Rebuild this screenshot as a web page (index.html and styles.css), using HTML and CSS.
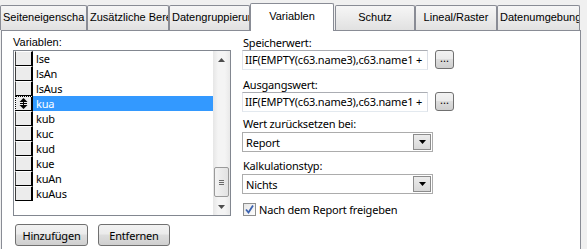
FILE: index.html
```html
<!DOCTYPE html>
<html lang="de">
<head>
  <meta charset="UTF-8">
  <title>Variablen</title>
  <link rel="stylesheet" href="styles.css">
</head>
<body>
  <div class="dialog">
    <div class="tabs">
      <div class="tab">Seiteneigenscha</div>
      <div class="tab">Zusätzliche Bere</div>
      <div class="tab">Datengruppierur</div>
      <div class="tab active">Variablen</div>
      <div class="tab">Schutz</div>
      <div class="tab">Lineal/Raster</div>
      <div class="tab">Datenumgebung</div>
    </div>

    <!-- Page: Variablen -->
    <div class="panel">
      <div class="left-col">
        <div class="list-label">Variablen:</div>
        <div class="listbox">
          <ul class="var-list">
            <li><span class="handle"></span><span class="name">lse</span></li>
            <li><span class="handle"></span><span class="name">lsAn</span></li>
            <li><span class="handle"></span><span class="name">lsAus</span></li>
            <li class="selected">
              <span class="handle focus">
                <svg width="9" height="11" viewBox="0 0 9 11">
                  <path d="M4.5 0 L8.5 4 L0.5 4 Z M4.5 11 L8.5 7 L0.5 7 Z" fill="#000"/>
                  <rect x="4" y="3" width="1" height="5" fill="#000"/>
                  <rect x="1" y="5" width="7" height="1" fill="#000"/>
                </svg>
              </span><span class="name">kua</span>
            </li>
            <li><span class="handle"></span><span class="name">kub</span></li>
            <li><span class="handle"></span><span class="name">kuc</span></li>
            <li><span class="handle"></span><span class="name">kud</span></li>
            <li><span class="handle"></span><span class="name">kue</span></li>
            <li><span class="handle"></span><span class="name">kuAn</span></li>
            <li><span class="handle"></span><span class="name">kuAus</span></li>
          </ul>
          <div class="scrollbar">
            <div class="sb-arrow">
              <svg width="7" height="4" viewBox="0 0 7 4"><path d="M3.5 0 L7 4 L0 4 Z" fill="#4d4d4d"/></svg>
            </div>
            <div class="sb-track">
              <div class="sb-thumb"><span></span><span></span><span></span></div>
            </div>
            <div class="sb-arrow">
              <svg width="7" height="4" viewBox="0 0 7 4"><path d="M0 0 L7 0 L3.5 4 Z" fill="#4d4d4d"/></svg>
            </div>
          </div>
        </div>
        <div class="buttons">
          <button class="btn add-btn">Hinzufügen</button>
          <button class="btn">Entfernen</button>
        </div>
      </div>

      <div class="right-col">
        <div class="field-label">Speicherwert:</div>
        <div class="field-row">
          <div class="textbox">IIF(EMPTY(c63.name3),c63.name1 +</div>
          <button class="dots-btn">...</button>
        </div>

        <div class="field-label second">Ausgangswert:</div>
        <div class="field-row">
          <div class="textbox">IIF(EMPTY(c63.name3),c63.name1 +</div>
          <button class="dots-btn">...</button>
        </div>

        <div class="field-label third">Wert zurücksetzen bei:</div>
        <div class="combo">
          <span class="combo-text">Report</span>
          <span class="combo-arrow">
            <svg width="7" height="4" viewBox="0 0 7 4"><path d="M0 0 L7 0 L3.5 4 Z" fill="#000"/></svg>
          </span>
        </div>

        <div class="field-label fourth">Kalkulationstyp:</div>
        <div class="combo">
          <span class="combo-text">Nichts</span>
          <span class="combo-arrow">
            <svg width="7" height="4" viewBox="0 0 7 4"><path d="M0 0 L7 0 L3.5 4 Z" fill="#000"/></svg>
          </span>
        </div>

        <label class="check-row">
          <span class="checkbox">
            <svg width="11" height="11" viewBox="0 0 11 11">
              <path d="M2 5.5 L4.5 8.5 L9 1.5" fill="none" stroke="#3b62b0" stroke-width="1.8"/>
            </svg>
          </span>
          Nach dem Report freigeben
        </label>
      </div>
    </div>
  </div>
</body>
</html>
```

FILE: styles.css
```css
/* General */
body {
  margin: 0;
  width: 587px;
  height: 249px;
  overflow: hidden;
  background: #f0f0f0;
  font-family: "Noto Sans", sans-serif;
  font-size: 11px;
  letter-spacing: -0.2px;
  color: #000;
}

/* Tab strip */
.tabs {
  display: grid;
  grid-template-columns: 87px 82px 81px 85px 80px 82px 83px;
  align-items: end;
  height: 30px;
}

.tab {
  box-sizing: border-box;
  height: 25px;
  padding: 0 2px;
  border: 1px solid #898c95;
  border-bottom: none;
  border-radius: 2px 2px 0 0;
  background: linear-gradient(#f6f6f6, #e1e1e1);
  font-family: "Liberation Sans", sans-serif;
  font-size: 11px;
  letter-spacing: 0;
  line-height: 22px;
  text-align: center;
  white-space: nowrap;
  overflow: hidden;
}

.tab.active {
  position: relative;
  z-index: 1;
  height: 28px;
  margin-right: 1px;
  margin-bottom: -1px;
  background: #fff;
  line-height: 24px;
}

/* Page */
.panel {
  box-sizing: border-box;
  display: grid;
  grid-template-columns: 218px 191px;
  column-gap: 11px;
  width: 580px;
  height: 219px;
  margin-left: 1px;
  padding: 4px 0 0 11px;
  border: 1px solid #898c95;
  border-bottom: none;
  background: #fff;
}

/* Left column: variable list */
.list-label {
  height: 15px;
  line-height: 15px;
  font-family: "Liberation Sans", sans-serif;
  letter-spacing: 0;
}

.listbox {
  box-sizing: border-box;
  display: flex;
  height: 166px;
  border: 1px solid #828790;
}

.var-list {
  flex: 1;
  list-style: none;
  margin: 0;
  padding: 0;
}

.var-list li {
  display: flex;
  height: 15px;
}

.handle {
  box-sizing: border-box;
  display: flex;
  align-items: center;
  justify-content: center;
  width: 18px;
  height: 15px;
  margin-left: 1px;
  border: 1px solid #000;
  border-top-color: #fff;
  border-left-color: #404040;
  border-right-width: 2px;
  background: #ececec;
}

.handle.focus {
  border-top: 1px dotted #000;
  border-left: 1px dotted #000;
}

.name {
  flex: 1;
  padding-left: 3px;
  line-height: 15px;
}

.selected .name {
  background: #3399ff;
  color: #fff;
}

/* Scrollbar */
.scrollbar {
  display: flex;
  flex-direction: column;
  width: 17px;
  background: linear-gradient(to right, #e6e6e6, #f4f4f4 30%, #f4f4f4 70%, #e9e9e9);
}

.sb-arrow {
  display: flex;
  align-items: center;
  justify-content: center;
  height: 17px;
}

.sb-track {
  flex: 1;
  display: flex;
  flex-direction: column;
  justify-content: flex-end;
  padding-bottom: 1px;
}

.sb-thumb {
  box-sizing: border-box;
  display: flex;
  flex-direction: column;
  align-items: center;
  justify-content: center;
  gap: 1px;
  height: 30px;
  margin: 0 1px;
  border: 1px solid #9a9a9a;
  border-radius: 2px;
  background: linear-gradient(to right, #f3f3f3, #e2e2e2);
}

.sb-thumb span {
  width: 5px;
  height: 1px;
  background: #6a6a6a;
}

/* Buttons */
.buttons {
  display: flex;
  gap: 10px;
  margin: 8px 0 0 2px;
}

.btn {
  box-sizing: border-box;
  width: 72px;
  height: 22px;
  padding: 0;
  border: 1px solid #707070;
  border-radius: 3px;
  background: linear-gradient(#f2f2f2, #ebebeb 45%, #dddddd 50%, #cfcfcf);
  font-family: "Noto Sans", sans-serif;
  font-size: 11px;
  letter-spacing: -0.2px;
  color: #000;
}

.add-btn {
  width: 73px;
}

/* Right column: fields */
.right-col {
  display: flex;
  flex-direction: column;
}

.field-label {
  height: 15px;
  padding-left: 1px;
  line-height: 15px;
}

.field-label.second {
  margin-top: 7px;
}

.field-label.third {
  margin-top: 4px;
}

.field-label.fourth {
  margin-top: 6px;
}

.field-row {
  display: flex;
  align-items: flex-start;
  gap: 7px;
  width: 212px;
}

.textbox {
  box-sizing: border-box;
  width: 186px;
  height: 20px;
  padding: 0 2px;
  border: 1px solid #abadb3;
  border-color: #abadb3 #dbdfe6 #e3e9ef #e2e3ea;
  line-height: 18px;
  white-space: nowrap;
  overflow: hidden;
}

.dots-btn {
  box-sizing: border-box;
  width: 19px;
  height: 19px;
  padding: 0 0 4px;
  border: 1px solid #707070;
  border-radius: 3px;
  background: linear-gradient(#f2f2f2, #ebebeb 45%, #dddddd 50%, #cfcfcf);
  font-family: "Noto Sans", sans-serif;
  font-size: 11px;
  line-height: 12px;
  color: #000;
}

.combo {
  box-sizing: border-box;
  display: flex;
  align-items: center;
  width: 191px;
  height: 20px;
  margin-top: 1px;
  padding: 1px;
  border: 1px solid #acacac;
}

.combo-text {
  flex: 1;
  padding-left: 2px;
}

.combo-arrow {
  box-sizing: border-box;
  display: flex;
  align-items: center;
  justify-content: center;
  width: 18px;
  height: 16px;
  border: 1px solid #8c8c8c;
  background: linear-gradient(#ececec, #d8d8d8);
}

.check-row {
  display: flex;
  align-items: center;
  gap: 3px;
  height: 15px;
  margin-top: 8px;
  padding-left: 1px;
}

.checkbox {
  box-sizing: border-box;
  display: flex;
  align-items: center;
  justify-content: center;
  width: 13px;
  height: 13px;
  border: 1px solid #8e8f8f;
  background: linear-gradient(135deg, #e6e6e6, #fdfdfd);
}
```
